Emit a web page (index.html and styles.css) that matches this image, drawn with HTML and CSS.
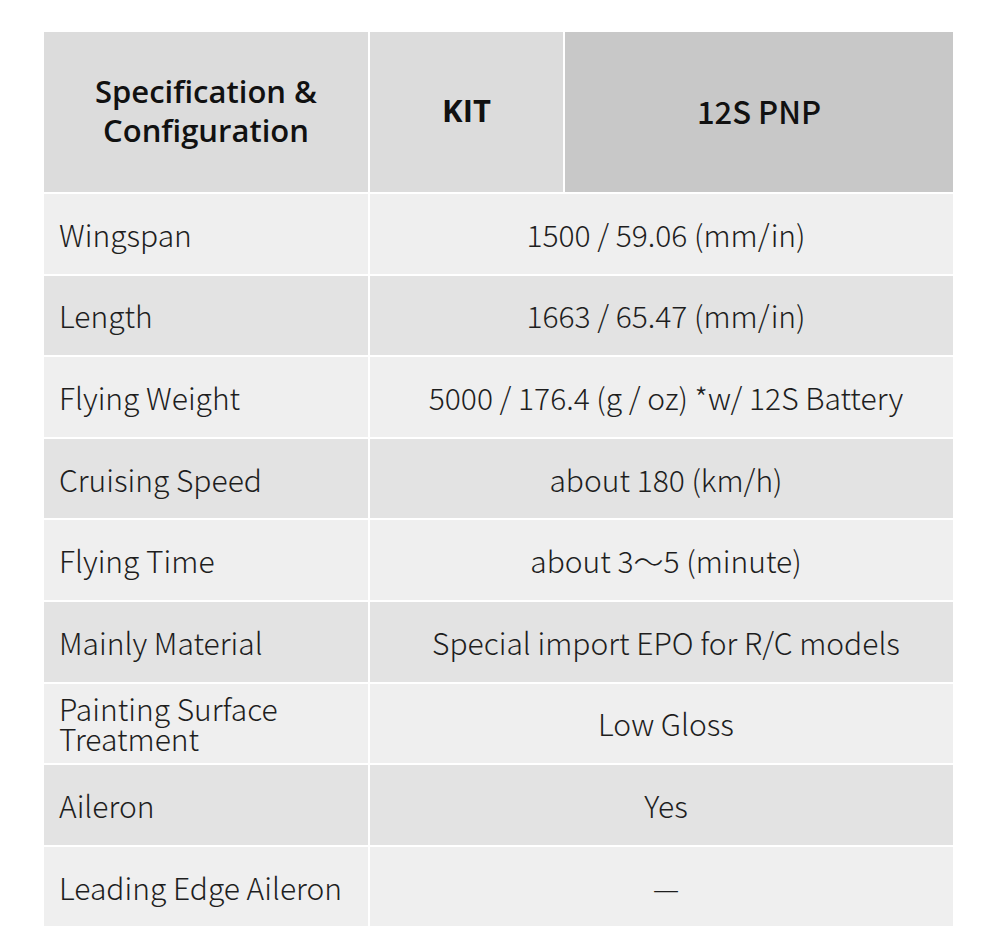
FILE: index.html
```html
<!DOCTYPE html>
<html lang="en">
<head>
<meta charset="utf-8">
<title>Specification</title>
<link rel="stylesheet" href="styles.css">
</head>
<body>
<div class="spec">
  <div class="head head-label">Specification &amp;<br>Configuration</div>
  <div class="head head-kit">KIT</div>
  <div class="head head-pnp">12S PNP</div>

  <div class="label light">Wingspan</div>
  <div class="value light">1500 / 59.06 (mm/in)</div>

  <div class="label dark">Length</div>
  <div class="value dark">1663 / 65.47 (mm/in)</div>

  <div class="label light">Flying Weight</div>
  <div class="value light">5000 / 176.4 (g / oz) *w/ 12S Battery</div>

  <div class="label dark">Cruising Speed</div>
  <div class="value dark">about 180 (km/h)</div>

  <div class="label light">Flying Time</div>
  <div class="value light">about 3～5 (minute)</div>

  <div class="label dark">Mainly Material</div>
  <div class="value dark">Special import EPO for R/C models</div>

  <div class="label light">Painting Surface<br>Treatment</div>
  <div class="value light">Low Gloss</div>

  <div class="label dark">Aileron</div>
  <div class="value dark">Yes</div>

  <div class="label light">Leading Edge Aileron</div>
  <div class="value light">—</div>
</div>
</body>
</html>
```

FILE: styles.css
```css
html, body {
  margin: 0;
  padding: 0;
  background: #ffffff;
}

body {
  font-family: "Noto Sans CJK SC", "Noto Sans", sans-serif;
  color: #1e1e1e;
}

.spec {
  margin: 32px 0 0 44px;
  width: 909px;
  display: grid;
  grid-template-columns: 324px 193px 388px;
  grid-template-rows: 160px repeat(9, 79.6px);
  gap: 2px;
}

.head {
  display: flex;
  align-items: center;
  justify-content: center;
  text-align: center;
  background: #dcdcdc;
  color: #111;
}

.head-label {
  font-family: "Open Sans", sans-serif;
  font-weight: 600;
  font-size: 31px;
  line-height: 39px;
  padding-bottom: 2px;
}

.head-kit {
  font-family: "Open Sans", sans-serif;
  font-weight: 700;
  font-size: 31px;
  padding-bottom: 4px;
}

.head-pnp {
  background: #c8c8c8;
  font-weight: 500;
  font-size: 31px;
  padding-bottom: 4px;
}

.label {
  display: flex;
  align-items: center;
  padding-left: 15px;
  font-size: 30px;
  font-weight: 300;
  line-height: 30px;
}

.value {
  grid-column: 2 / 4;
  display: flex;
  align-items: center;
  justify-content: center;
  padding-left: 9px;
  font-size: 30px;
  font-weight: 300;
}

.light {
  background: #efefef;
}

.dark {
  background: #e3e3e3;
}
```
